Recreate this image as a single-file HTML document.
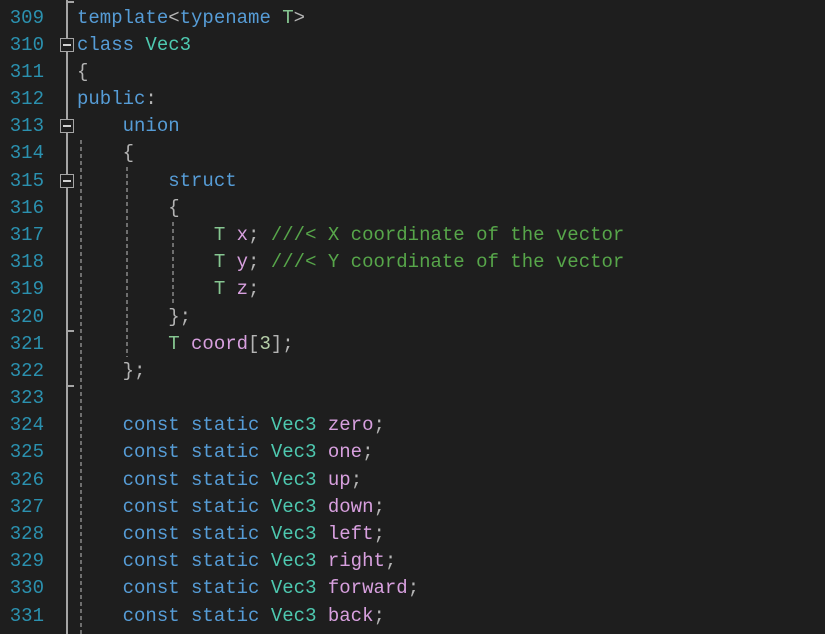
<!DOCTYPE html>
<html><head><meta charset="utf-8"><style>
html,body{margin:0;padding:0;background:#1e1e1e;width:825px;height:634px;overflow:hidden;position:relative}
.l{position:absolute;left:0;height:27px;line-height:27px;font-family:"Liberation Mono",monospace;font-size:19px;white-space:pre;color:#dcdcdc}
.n{position:absolute;left:0;width:44px;text-align:right;color:#2b91af}
.c{position:absolute;left:77px}
.k{color:#569cd6}.t{color:#4ec9b0}.p{color:#86c691}.m{color:#d8a0df}.g{color:#57a64a}.b{color:#b4b4b4}
.v{position:absolute;width:2px;background:#a5a5a5}
.h{position:absolute;height:2px;background:#a5a5a5;width:7px;left:67px}
.box{position:absolute;left:60px;width:12px;height:12px;border:1px solid #a5a5a5;background:#1e1e1e}
.box:after{content:"";position:absolute;left:2px;top:5px;width:8px;height:2px;background:#d0d0d0}
.d{position:absolute;width:2px;background:repeating-linear-gradient(to bottom,#6e6e6e 0 4px,transparent 4px 7px)}
</style></head><body>
<div class="v" style="left:66px;top:0;height:634px"></div>
<div class="h" style="top:1px"></div>
<div class="h" style="top:330px"></div>
<div class="h" style="top:385px"></div>
<div class="box" style="top:38px"></div>
<div class="box" style="top:119px"></div>
<div class="box" style="top:174px"></div>
<div class="d" style="left:80px;top:140px;height:494px"></div>
<div class="d" style="left:126px;top:167px;height:190px"></div>
<div class="d" style="left:172px;top:222px;height:82px"></div>

<div class="l" style="top:4.5px"><span class="n">309</span><span class="c"><span class="k">template</span><span class="b">&lt;</span><span class="k">typename</span> <span class="p">T</span><span class="b">&gt;</span></span></div>
<div class="l" style="top:31.7px"><span class="n">310</span><span class="c"><span class="k">class</span> <span class="t">Vec3</span></span></div>
<div class="l" style="top:58.9px"><span class="n">311</span><span class="c"><span class="b">{</span></span></div>
<div class="l" style="top:86.0px"><span class="n">312</span><span class="c"><span class="k">public</span><span class="b">:</span></span></div>
<div class="l" style="top:113.2px"><span class="n">313</span><span class="c">    <span class="k">union</span></span></div>
<div class="l" style="top:140.4px"><span class="n">314</span><span class="c">    <span class="b">{</span></span></div>
<div class="l" style="top:167.6px"><span class="n">315</span><span class="c">        <span class="k">struct</span></span></div>
<div class="l" style="top:194.8px"><span class="n">316</span><span class="c">        <span class="b">{</span></span></div>
<div class="l" style="top:221.9px"><span class="n">317</span><span class="c">            <span class="p">T</span> <span class="m">x</span><span class="b">;</span> <span class="g">///&lt; X coordinate of the vector</span></span></div>
<div class="l" style="top:249.1px"><span class="n">318</span><span class="c">            <span class="p">T</span> <span class="m">y</span><span class="b">;</span> <span class="g">///&lt; Y coordinate of the vector</span></span></div>
<div class="l" style="top:276.3px"><span class="n">319</span><span class="c">            <span class="p">T</span> <span class="m">z</span><span class="b">;</span></span></div>
<div class="l" style="top:303.5px"><span class="n">320</span><span class="c">        <span class="b">};</span></span></div>
<div class="l" style="top:330.7px"><span class="n">321</span><span class="c">        <span class="p">T</span> <span class="m">coord</span><span class="b">[</span><span style="color:#b5cea8">3</span><span class="b">];</span></span></div>
<div class="l" style="top:357.8px"><span class="n">322</span><span class="c">    <span class="b">};</span></span></div>
<div class="l" style="top:385.0px"><span class="n">323</span></div>
<div class="l" style="top:412.2px"><span class="n">324</span><span class="c">    <span class="k">const</span> <span class="k">static</span> <span class="t">Vec3</span> <span class="m">zero</span><span class="b">;</span></span></div>
<div class="l" style="top:439.4px"><span class="n">325</span><span class="c">    <span class="k">const</span> <span class="k">static</span> <span class="t">Vec3</span> <span class="m">one</span><span class="b">;</span></span></div>
<div class="l" style="top:466.6px"><span class="n">326</span><span class="c">    <span class="k">const</span> <span class="k">static</span> <span class="t">Vec3</span> <span class="m">up</span><span class="b">;</span></span></div>
<div class="l" style="top:493.7px"><span class="n">327</span><span class="c">    <span class="k">const</span> <span class="k">static</span> <span class="t">Vec3</span> <span class="m">down</span><span class="b">;</span></span></div>
<div class="l" style="top:520.9px"><span class="n">328</span><span class="c">    <span class="k">const</span> <span class="k">static</span> <span class="t">Vec3</span> <span class="m">left</span><span class="b">;</span></span></div>
<div class="l" style="top:548.1px"><span class="n">329</span><span class="c">    <span class="k">const</span> <span class="k">static</span> <span class="t">Vec3</span> <span class="m">right</span><span class="b">;</span></span></div>
<div class="l" style="top:575.3px"><span class="n">330</span><span class="c">    <span class="k">const</span> <span class="k">static</span> <span class="t">Vec3</span> <span class="m">forward</span><span class="b">;</span></span></div>
<div class="l" style="top:602.5px"><span class="n">331</span><span class="c">    <span class="k">const</span> <span class="k">static</span> <span class="t">Vec3</span> <span class="m">back</span><span class="b">;</span></span></div>
</body></html>
